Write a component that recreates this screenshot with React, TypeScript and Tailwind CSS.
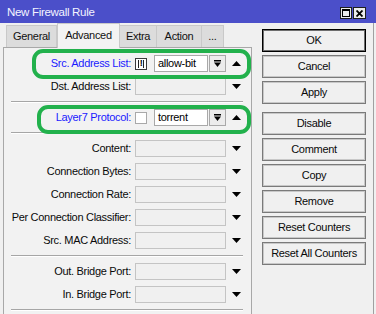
import React from "react";

const Down = () => (
  <svg width="9" height="5" viewBox="0 0 9 5"><polygon points="0,0 9,0 4.5,5" fill="#000" /></svg>
);
const Up = () => (
  <svg width="9" height="5" viewBox="0 0 9 5"><polygon points="0,5 9,5 4.5,0" fill="#000" /></svg>
);
const DropGlyph = () => (
  <svg width="7" height="7" viewBox="0 0 7 7">
    <rect x="0" y="0" width="7" height="1.5" fill="#000" />
    <polygon points="0,2.5 7,2.5 3.5,7" fill="#000" />
  </svg>
);

function Label({ text, blue }: { text: string; blue?: boolean }) {
  return (
    <div className={`w-[127px] text-right whitespace-nowrap ${blue ? "text-[#1a1aff]" : "text-[#0a0a0a]"}`}>
      {text}
    </div>
  );
}

function EmptyRow({ label }: { label: string }) {
  return (
    <div className="flex items-center h-[23px]">
      <Label text={label} />
      <div className="ml-[4px] w-[91px] h-[17px] border border-[#c4c4c4] bg-[#f0f0f0]" />
      <div className="w-[20px] flex justify-center">
        <Down />
      </div>
    </div>
  );
}

function Sep() {
  return (
    <div className="h-[8px] flex items-center">
      <div className="ml-[7px] w-[232px] h-[2px] border-t border-[#a6a6a6] border-b border-b-white" />
    </div>
  );
}

function Btn({ label, def, extra }: { label: string; def?: boolean; extra?: string }) {
  return (
    <div
      className={`w-[104px] h-[23px] flex items-center justify-center bg-[#f0f0f0] text-[#0a0a0a] ${
        def ? "border border-black shadow-[inset_0_0_0_1px_#6e6e6e]" : "border border-[#7a7a7a] shadow-[inset_0_0_0_1px_#c8c8c8]"
      } ${extra ?? ""}`}
    >
      {label}
    </div>
  );
}

export default function App() {
  return (
    <div className="w-[376px] h-[314px] overflow-hidden bg-[#f0f0f0] relative font-['Liberation_Sans',Arial,sans-serif] text-[11px] tracking-[-0.3px] leading-none">
      {/* title bar */}
      <div className="h-[23px] bg-[#4b4fc9] flex items-start">
        <span className="text-[#f4f4ff] pl-[7px] pt-[7px] text-[11.5px]">New Firewall Rule</span>
        <div className="ml-auto mr-[10px] mt-[7px] flex gap-[1px]">
          <div className="w-[12px] h-[12px] bg-[#ececec] border border-[#1e1e1e] flex items-center justify-center">
            <div className="w-[8px] h-[8px] border border-black border-t-2" />
          </div>
          <div className="w-[13px] h-[12px] bg-[#ececec] border border-[#1e1e1e] flex items-center justify-center">
            <svg width="7" height="7" viewBox="0 0 7 7">
              <path d="M0.5 0.5 L6.5 6.5 M6.5 0.5 L0.5 6.5" stroke="#000" strokeWidth="1.8" />
            </svg>
          </div>
        </div>
      </div>

      {/* body */}
      <div className="flex w-[374px] h-[291px] border-r border-[#a0a0a0]">
        {/* left: tabs + panel */}
        <div className="pl-[3px] flex flex-col">
          <div className="h-[27px] flex items-end pl-[3px] relative z-10">
            <div className="w-[51px] h-[22px] bg-[#dcdcdc] border border-[#c9c9c9] border-b-0 flex items-center justify-center text-[#111]">
              General
            </div>
            <div className="w-[63px] h-[25px] -mb-[1px] bg-[#f3f3f3] border border-[#c9c9c9] border-b-0 flex items-center justify-center text-[#111] pb-[2px]">
              Advanced
            </div>
            <div className="w-[37px] h-[22px] bg-[#dcdcdc] border border-[#c9c9c9] border-b-0 border-l-0 flex items-center justify-center text-[#111]">
              Extra
            </div>
            <div className="w-[45px] h-[22px] bg-[#dcdcdc] border border-[#c9c9c9] border-b-0 border-l-0 flex items-center justify-center text-[#111]">
              Action
            </div>
            <div className="w-[22px] h-[22px] bg-[#dcdcdc] border border-[#c9c9c9] border-b-0 border-l-0 flex items-center justify-center text-[#111]">
              ...
            </div>
          </div>
          <div className="w-[249px] flex-1 border border-[#a8a8a8] border-b-0 bg-[#f2f2f2] pt-[4px]">
            {/* Src address list */}
            <div className="flex items-center h-[23px]">
              <Label text="Src. Address List:" blue />
              <div className="ml-[4px] w-[91px] h-[17px] flex items-center">
                <div className="w-[12px] h-[12px] border border-[#3a3a3a] bg-white flex items-center justify-center">
                  <div className="w-[6px] h-[8px] border-x border-[#222] flex items-center justify-center text-[9px] font-bold leading-none">!</div>
                </div>
                <div className="ml-[7px] w-[54px] h-[17px] border border-[#a9a9a9] bg-white flex items-center pl-[3px] text-black">
                  allow-bit
                </div>
                <div className="ml-[1px] w-[17px] h-[17px] border border-[#a9a9a9] bg-[#ececec] flex items-center justify-center">
                  <DropGlyph />
                </div>
              </div>
              <div className="w-[20px] flex justify-center">
                <Up />
              </div>
            </div>
            <EmptyRow label="Dst. Address List:" />
            <Sep />
            {/* Layer7 */}
            <div className="flex items-center h-[23px]">
              <Label text="Layer7 Protocol:" blue />
              <div className="ml-[4px] w-[91px] h-[17px] flex items-center">
                <div className="w-[12px] h-[12px] border border-[#a9a9a9] bg-white" />
                <div className="ml-[7px] w-[54px] h-[17px] border border-[#a9a9a9] bg-white flex items-center pl-[3px] text-black">
                  torrent
                </div>
                <div className="ml-[1px] w-[17px] h-[17px] border border-[#a9a9a9] bg-[#ececec] flex items-center justify-center">
                  <DropGlyph />
                </div>
              </div>
              <div className="w-[20px] flex justify-center">
                <Up />
              </div>
            </div>
            <Sep />
            <EmptyRow label="Content:" />
            <EmptyRow label="Connection Bytes:" />
            <EmptyRow label="Connection Rate:" />
            <EmptyRow label="Per Connection Classifier:" />
            <EmptyRow label="Src. MAC Address:" />
            <Sep />
            <EmptyRow label="Out. Bridge Port:" />
            <EmptyRow label="In. Bridge Port:" />
            <Sep />
          </div>
        </div>

        {/* right: buttons */}
        <div className="ml-[10px] pt-[6px] flex flex-col gap-[3px]">
          <Btn label="OK" def />
          <Btn label="Cancel" />
          <Btn label="Apply" />
          <Btn label="Disable" extra="mt-[5px]" />
          <Btn label="Comment" />
          <Btn label="Copy" />
          <Btn label="Remove" />
          <Btn label="Reset Counters" />
          <Btn label="Reset All Counters" />
        </div>
      </div>

      {/* green annotation outlines */}
      <div className="absolute left-[32px] top-[49px] w-[219px] h-[30px] border-[4px] border-[#22b14c] rounded-[11px] pointer-events-none" />
      <div className="absolute left-[37px] top-[105px] w-[214px] h-[29px] border-[4px] border-[#22b14c] rounded-[11px] pointer-events-none" />
    </div>
  );
}
